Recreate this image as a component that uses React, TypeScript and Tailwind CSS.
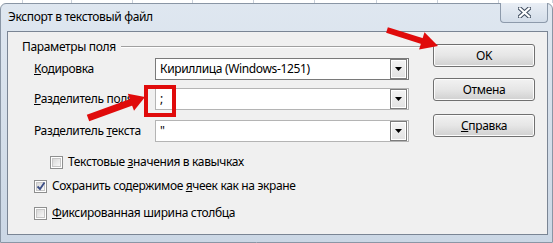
import React from "react";

const gridCells = [
  "w-[23px]", "w-[49px]", "w-[61px]", "w-[60px]", "w-[61px]", "w-[61px]",
  "w-[62px]", "w-[61px]", "w-[61px]", "w-[54px]",
];

function Combo({ value, focused }: { value: string; focused?: boolean }) {
  return (
    <div
      className={`flex h-[22px] w-[254px] items-center border bg-white pl-[4px] pr-[1px] ${
        focused ? "border-[#7a7a7a]" : "border-[#b4b4b4]"
      }`}
    >
      <span className="flex-1 leading-none">{value}</span>
      <div className="flex h-[20px] w-[17px] items-center justify-center border border-[#7c7c7c] bg-linear-to-b from-[#f4f4f4] to-[#e2e2e2] shadow-[inset_0_0_0_1px_#ffffff]">
        <svg width="7" height="4" viewBox="0 0 7 4">
          <polygon points="0,0 7,0 3.5,4" fill="#000" />
        </svg>
      </div>
    </div>
  );
}

function Check({ checked }: { checked?: boolean }) {
  return (
    <div className="flex h-[13px] w-[13px] items-center justify-center border border-[#8e8f8f] bg-white">
      <div className="relative h-[9px] w-[9px] border border-[#c6c6c6] bg-linear-to-br from-[#d8d8d8] to-[#f8f8f8]">
        {checked && (
          <svg className="absolute left-[-1px] top-[-2px]" width="10" height="10" viewBox="0 0 10 10">
            <path d="M1.5 5.5 L4 8 L8.5 1.5" fill="none" stroke="#3b4e86" strokeWidth="1.8" />
          </svg>
        )}
      </div>
    </div>
  );
}

function Btn({ children }: { children: React.ReactNode }) {
  return (
    <div className="flex h-[23px] w-[102px] items-center justify-center rounded-[3px] border border-[#707070] bg-linear-to-b from-[#f2f2f2] via-[#e6e6e6] to-[#d0d0d0] shadow-[inset_0_0_0_1px_#fcfcfc]">
      {children}
    </div>
  );
}

export default function App() {
  return (
    <div className="relative h-[243px] w-[553px] overflow-hidden bg-white font-['Noto_Sans','DejaVu_Sans',sans-serif] text-[12px] tracking-[-0.35px] text-black">
      {/* таблица позади окна */}
      <div className="flex h-[3px]">
        {gridCells.map((c, i) => (
          <div key={i} className={`${c} border-r border-[#c9d0da]`} />
        ))}
      </div>

      {/* окно */}
      <div className="flex h-[240px] flex-col rounded-t-[6px] border border-[#8a96a5] bg-linear-to-b from-[#dfe7f0] to-[#cbd7e5] pb-[7px] pl-[6px] pr-[4px]">
        <div className="flex h-[27px] items-start justify-between">
          <span className="pl-[1px] pt-[5px] leading-[16px] text-[#000]">Экспорт в текстовый файл</span>
          <div className="-mt-px flex h-[20px] w-[48px] items-center justify-center rounded-b-[4px] border border-t-0 border-[#8d9aab] bg-linear-to-b from-[#e9eef5] to-[#d3dde9]">
            <svg width="13" height="11" viewBox="0 0 13 11">
              <path d="M2 1.5 L11 9.5 M11 1.5 L2 9.5" stroke="#3f4c5e" strokeWidth="4.2" strokeLinecap="square" />
              <path d="M2 1.5 L11 9.5 M11 1.5 L2 9.5" stroke="#ffffff" strokeWidth="2.2" strokeLinecap="square" />
            </svg>
          </div>
        </div>

        <div className="flex flex-1 border border-[#7a8594] bg-[#f0f0f0]">
          {/* параметры */}
          <div className="w-[425px] pl-[14px] pr-[9px] pt-[7px]">
            <div className="flex h-[15px] items-center">
              <span>Параметры поля</span>
              <div className="ml-[5px] h-[2px] flex-1 border-b border-t border-b-white border-t-[#a0a0a0]" />
            </div>

            <div className="mt-[4px] pl-[12px]">
              <div className="flex h-[22px] items-center">
                <span className="w-[121px]"><u>К</u>одировка</span>
                <Combo value="Кириллица (Windows-1251)" focused />
              </div>
              <div className="mt-[8px] flex h-[22px] items-center">
                <span className="w-[121px]"><u>Р</u>азделитель поля</span>
                <Combo value=";" />
              </div>
              <div className="mt-[10px] flex h-[22px] items-center">
                <span className="w-[121px]">Разделитель <u>т</u>екста</span>
                <Combo value={'"'} />
              </div>

              <div className="mt-[12px] flex h-[16px] items-center gap-[5px] pl-[16px]">
                <Check />
                <span>Текстовые <u>з</u>начения в кавычках</span>
              </div>
              <div className="mt-[8px] flex h-[16px] items-center gap-[5px]">
                <Check checked />
                <span>Сохранить содержимое <u>я</u>чеек как на экране</span>
              </div>
              <div className="mt-[11px] flex h-[16px] items-center gap-[5px]">
                <Check />
                <span><u>Ф</u>иксированная ширина столбца</span>
              </div>
            </div>
          </div>

          {/* кнопки */}
          <div className="flex w-[102px] flex-col pt-[12px]">
            <Btn>OK</Btn>
            <div className="mt-[11px]">
              <Btn>Отмена</Btn>
            </div>
            <div className="mt-[13px]">
              <Btn><span><u>С</u>правка</span></Btn>
            </div>
          </div>
        </div>
      </div>

      {/* пометки поверх */}
      <svg className="pointer-events-none absolute left-0 top-0" width="553" height="243" viewBox="0 0 553 243">
        <rect x="146" y="87" width="28" height="28" fill="none" stroke="#e00b0b" strokeWidth="4" />
        <line x1="88" y1="118" x2="132" y2="102" stroke="#e00b0b" strokeWidth="7" />
        <polygon points="145,97 134,110.7 127.8,93.7" fill="#e00b0b" />
        <line x1="387" y1="30" x2="423" y2="41.3" stroke="#e00b0b" strokeWidth="6" />
        <polygon points="438,46 419.1,49.5 424.5,32.3" fill="#e00b0b" />
      </svg>
    </div>
  );
}
